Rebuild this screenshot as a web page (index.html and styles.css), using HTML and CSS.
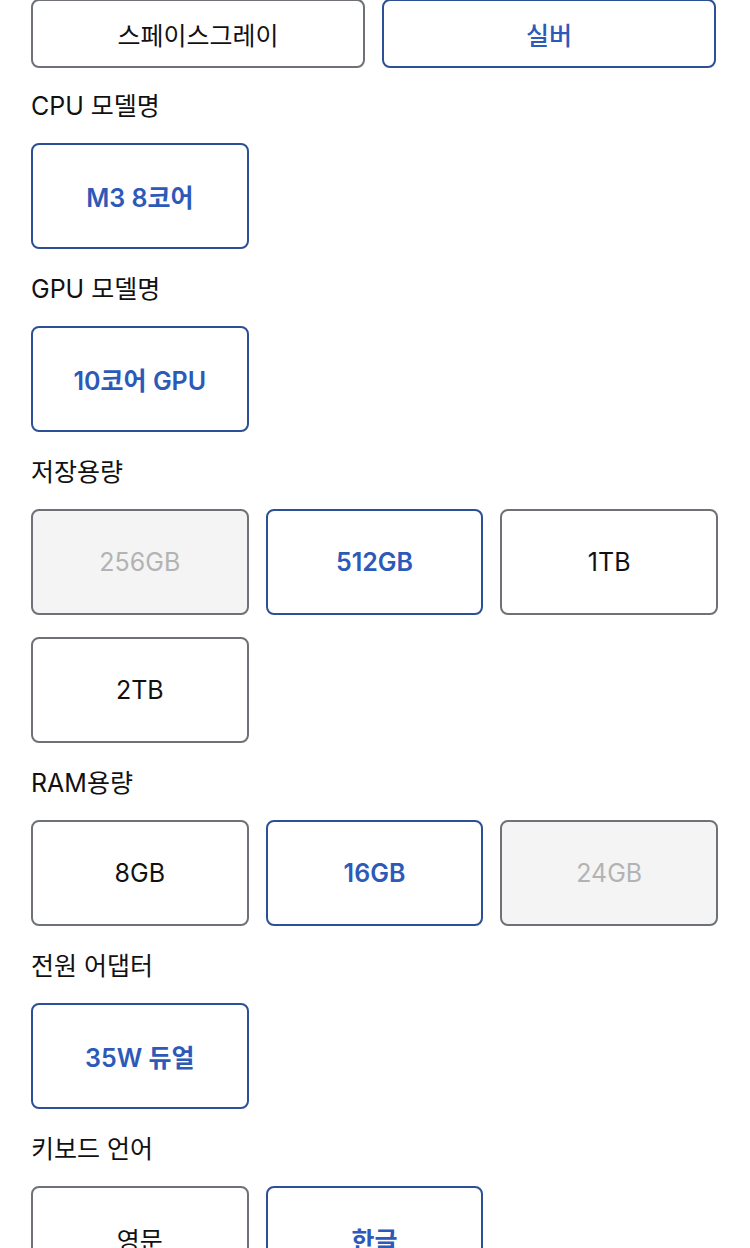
FILE: index.html
```html
<!DOCTYPE html>
<html lang="ko">
<head>
    <meta charset="UTF-8">
    <meta name="viewport" content="width=device-width, initial-scale=1.0">
    <title>옵션 선택</title>
    <link rel="stylesheet" href="styles.css">
</head>
<body>
    <div class="options">
        <div class="option-row two top-row">
            <button class="opt short">스페이스그레이</button>
            <button class="opt short selected">실버</button>
        </div>

        <h2 class="opt-label">CPU 모델명</h2>
        <div class="option-row">
            <button class="opt selected">M3 8코어</button>
        </div>

        <h2 class="opt-label">GPU 모델명</h2>
        <div class="option-row">
            <button class="opt selected">10코어 GPU</button>
        </div>

        <h2 class="opt-label">저장용량</h2>
        <div class="option-row">
            <button class="opt disabled">256GB</button>
            <button class="opt selected">512GB</button>
            <button class="opt">1TB</button>
            <button class="opt">2TB</button>
        </div>

        <h2 class="opt-label">RAM용량</h2>
        <div class="option-row">
            <button class="opt">8GB</button>
            <button class="opt selected">16GB</button>
            <button class="opt disabled">24GB</button>
        </div>

        <h2 class="opt-label">전원 어댑터</h2>
        <div class="option-row">
            <button class="opt selected">35W 듀얼</button>
        </div>

        <h2 class="opt-label">키보드 언어</h2>
        <div class="option-row">
            <button class="opt">영문</button>
            <button class="opt selected">한글</button>
        </div>
    </div>
</body>
</html>
```

FILE: styles.css
```css
body {
    background-color: #ffffff;
    color: #111111;
    font-family: Inter, 'Noto Sans CJK KR', sans-serif;
    margin: 0;
    padding: 0 32px 0 31px;
}

.options {
    margin-top: -1px;
}

/* Section titles */
.opt-label {
    font-size: 25px;
    font-weight: 400;
    line-height: 30px;
    height: 30px;
    margin: 25px 0 22px 0;
    color: #111;
}

.top-row + .opt-label {
    margin-top: 23px;
}

/* Grid of option buttons */
.option-row {
    display: grid;
    grid-template-columns: repeat(3, 1fr);
    column-gap: 17px;
    row-gap: 22px;
}

.option-row.two {
    grid-template-columns: repeat(2, 1fr);
    padding-right: 2px;
}

.opt {
    height: 106px;
    border: 2px solid #6e7175;
    border-radius: 8px;
    background-color: #fff;
    color: #111;
    font-family: Inter, 'Noto Sans CJK KR', sans-serif;
    font-size: 25px;
    font-weight: 400;
    padding: 0;
}

.opt.short {
    height: 69px;
}

.opt.selected {
    border-color: #2d4f95;
    color: #2d59b9;
    font-weight: 600;
}

.top-row .opt.selected {
    font-weight: 500;
}

.opt.disabled {
    background-color: #f4f4f4;
    color: #b3b3b3;
}
```
